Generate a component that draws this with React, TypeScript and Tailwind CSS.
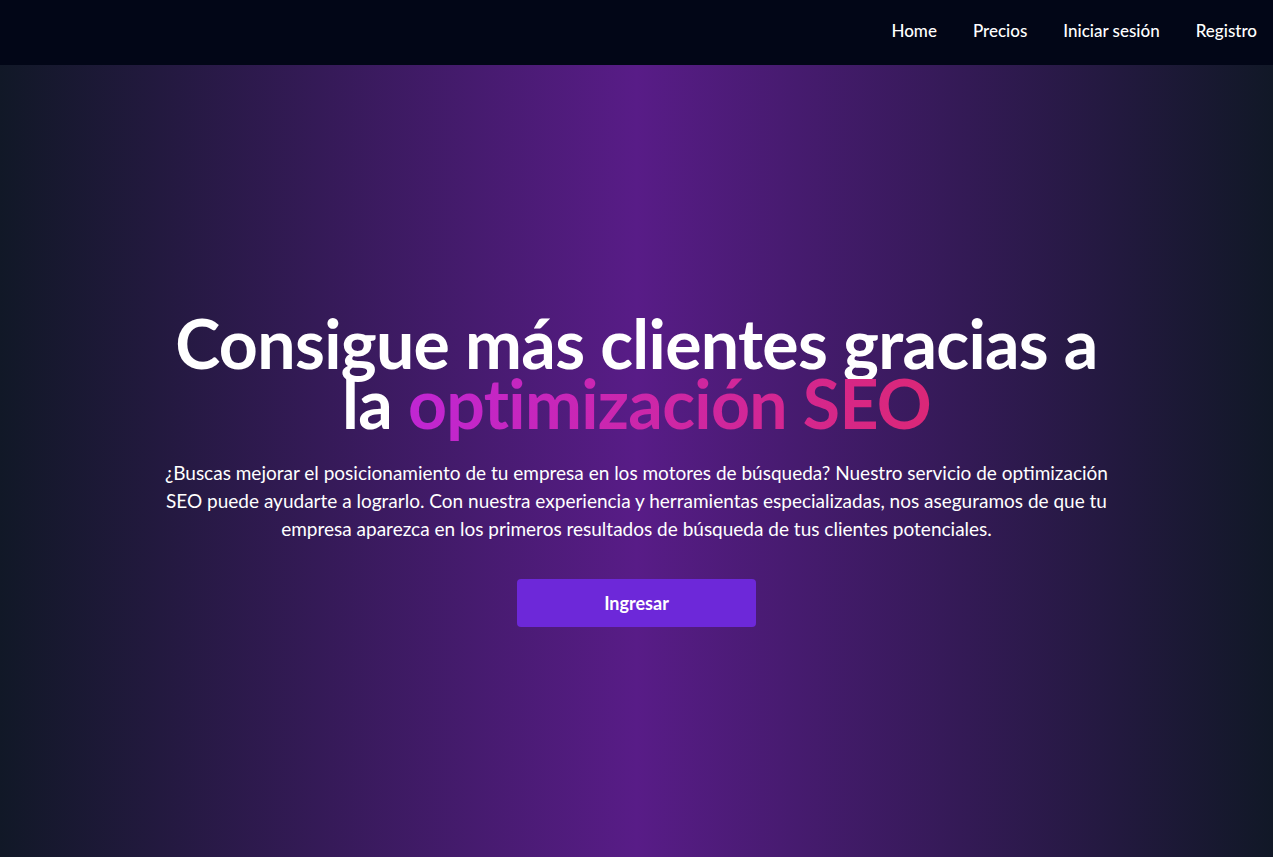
export default function App() {
  return (
    <div className="h-screen w-full flex flex-col font-['Lato',sans-serif] text-white overflow-hidden">
      {/* NAVBAR */}
      <header className="h-[65px] shrink-0 bg-[#020617] flex items-center justify-end pr-4 pb-1">
        <nav className="flex items-center gap-9 text-[17px] font-medium">
          <a href="#">Home</a>
          <a href="#">Precios</a>
          <a href="#">Iniciar sesión</a>
          <a href="#">Registro</a>
        </nav>
      </header>

      {/* HERO */}
      <main className="flex-1 flex items-center justify-center bg-linear-to-r/srgb from-[#111827] via-[#581c87] to-[#111827]">
        <div className="flex flex-col items-center text-center px-4 mt-[18px]">
          <h1 className="text-[68px] leading-[60px] font-bold tracking-[-0.01em] max-w-[950px]">
            Consigue más clientes gracias a la{" "}
            <span className="bg-linear-to-r/srgb from-[#c026d3] to-[#db2777] bg-clip-text text-transparent">
              optimización SEO
            </span>
          </h1>
          <p className="mt-[26px] max-w-[960px] text-[19px] leading-[28px]">
            ¿Buscas mejorar el posicionamiento de tu empresa en los motores de búsqueda? Nuestro
            servicio de optimización SEO puede ayudarte a lograrlo. Con nuestra experiencia y
            herramientas especializadas, nos aseguramos de que tu empresa aparezca en los primeros
            resultados de búsqueda de tus clientes potenciales.
          </p>
          <button className="mt-9 w-[239px] h-12 rounded bg-[#6d28d9] text-[18px] font-bold">
            Ingresar
          </button>
        </div>
      </main>
    </div>
  );
}
